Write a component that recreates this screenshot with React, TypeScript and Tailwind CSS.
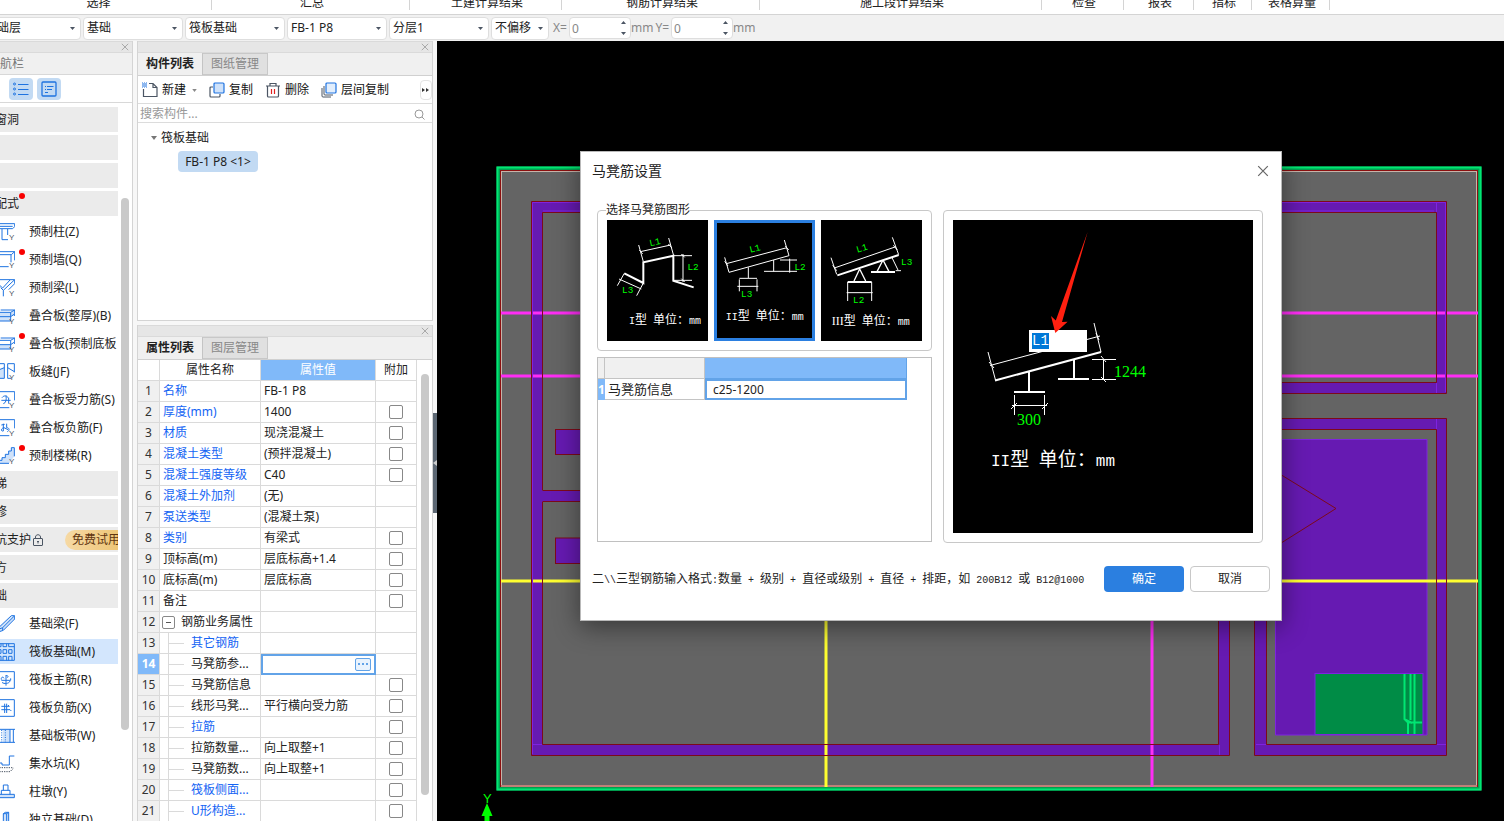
import { useEffect, useRef } from "react";
import type { ReactNode } from "react";

const ribbonGroups = [
  { label: "选择", width: "w-[212px] pr-3.5" },
  { label: "汇总", width: "w-[198px] pl-[3px]" },
  { label: "土建计算结果", width: "w-[152px] pl-[3px]" },
  { label: "钢筋计算结果", width: "w-[198px] pl-[3px]" },
  { label: "施工段计算结果", width: "w-[282px] pl-[3px]" },
  { label: "检查", width: "w-[82px] pl-[3px]" },
  { label: "报表", width: "w-[70px] pl-[3px]" },
  { label: "指标", width: "w-[58px] pl-[3px]" },
  { label: "表格算量", width: "w-[78px] pl-[3px]" },
];

type NavRow = {
  label: string;
  kind: "group" | "item";
  icon?: string;
  dot?: boolean;
  active?: boolean;
  trial?: boolean;
};

const navRows: NavRow[] = [
  { label: "门窗洞", kind: "group" },
  { label: "", kind: "group" },
  { label: "", kind: "group" },
  { label: "装配式", kind: "group", dot: true },
  { label: "预制柱(Z)", kind: "item", icon: "column" },
  { label: "预制墙(Q)", kind: "item", icon: "wall", dot: true },
  { label: "预制梁(L)", kind: "item", icon: "beam" },
  { label: "叠合板(整厚)(B)", kind: "item", icon: "slab" },
  { label: "叠合板(预制底板", kind: "item", icon: "slabHalf", dot: true },
  { label: "板缝(JF)", kind: "item", icon: "joint" },
  { label: "叠合板受力筋(S)", kind: "item", icon: "rebarS" },
  { label: "叠合板负筋(F)", kind: "item", icon: "rebarF" },
  { label: "预制楼梯(R)", kind: "item", icon: "stair", dot: true },
  { label: "楼梯", kind: "group" },
  { label: "装修", kind: "group" },
  { label: "基坑支护", kind: "group", trial: true },
  { label: "土方", kind: "group" },
  { label: "基础", kind: "group" },
  { label: "基础梁(F)", kind: "item", icon: "footBeam" },
  { label: "筏板基础(M)", kind: "item", icon: "raft", active: true },
  { label: "筏板主筋(R)", kind: "item", icon: "raftMain" },
  { label: "筏板负筋(X)", kind: "item", icon: "raftNeg" },
  { label: "基础板带(W)", kind: "item", icon: "strip" },
  { label: "集水坑(K)", kind: "item", icon: "sump" },
  { label: "柱墩(Y)", kind: "item", icon: "pier" },
  { label: "独立基础(D)", kind: "item", icon: "pad" },
];

type Prop = {
  name: string;
  value?: string;
  blue?: boolean;
  check?: boolean;
  child?: boolean;
};

const props: Prop[] = [
  { name: "名称", value: "FB-1 P8", blue: true },
  { name: "厚度(mm)", value: "1400", blue: true, check: true },
  { name: "材质", value: "现浇混凝土", blue: true, check: true },
  { name: "混凝土类型", value: "(预拌混凝土)", blue: true, check: true },
  { name: "混凝土强度等级", value: "C40", blue: true, check: true },
  { name: "混凝土外加剂", value: "(无)", blue: true },
  { name: "泵送类型", value: "(混凝土泵)", blue: true },
  { name: "类别", value: "有梁式", blue: true, check: true },
  { name: "顶标高(m)", value: "层底标高+1.4", check: true },
  { name: "底标高(m)", value: "层底标高", check: true },
  { name: "备注", check: true },
  { name: "钢筋业务属性" },
  { name: "其它钢筋", blue: true, child: true },
  { name: "马凳筋参...", child: true },
  { name: "马凳筋信息", child: true, check: true },
  { name: "线形马凳...", value: "平行横向受力筋", child: true, check: true },
  { name: "拉筋", blue: true, child: true, check: true },
  { name: "拉筋数量...", value: "向上取整+1", child: true, check: true },
  { name: "马凳筋数...", value: "向上取整+1", child: true, check: true },
  { name: "筏板侧面...", blue: true, child: true, check: true },
  { name: "U形构造...", blue: true, child: true, check: true },
];

const tag = (
  <text x="27" y="52" fontSize="24" fill="#4b5563" stroke="none" fontFamily="Liberation Sans, sans-serif">
    Y
  </text>
);

const navIcons: Record<string, ReactNode> = {
  column: (
    <>
      <path d="M-2 2H44V11L38 17H-2M-2 10H38M6 18V50H24M23 18V36" />
      {tag}
    </>
  ),
  wall: (
    <>
      <path d="M-2 2H44V28M-2 11H34L44 2M33 11V34M-2 47H26" />
      {tag}
    </>
  ),
  beam: (
    <>
      <path d="M-2 2H44L10 34V52M-2 18L8 27L30 3M10 34L2 26M44 3V14L26 32" />
      {tag}
    </>
  ),
  slab: (
    <>
      <path d="M-2 16H34L44 7V26H30V42H-2Z" fill="#cfe2fa" stroke="none" />
      <path d="M-2 16H32V42H-2M-2 29H32M2 9H44L32 16M44 9V27M32 29L42 22" />
      {tag}
    </>
  ),
  slabHalf: (
    <>
      <path d="M-2 29H32V42H-2Z" fill="#cfe2fa" stroke="none" />
      <path d="M-2 16H32V42H-2M-2 29H32M2 9H44L32 16M44 9V27M32 29L42 22" />
      {tag}
    </>
  ),
  joint: (
    <>
      <path d="M-2 20L12 14V46H-2Z" fill="#cfe2fa" stroke="none" />
      <path d="M-2 2H13V46H-2M-2 20L13 14M34 46H23V2H43V28M23 14L43 26" />
      {tag}
    </>
  ),
  rebarS: (
    <>
      <path d="M-2 2H44V28M-2 50H28M6 20C12 12 22 14 24 20M4 28H32M10 38C18 36 20 26 18 14M26 20V38" />
      {tag}
    </>
  ),
  rebarF: (
    <>
      <path d="M-2 2H44V28M-2 50H28M4 18L14 16M10 14V36C2 38 2 28 12 26L24 32M20 14V26C28 26 30 34 22 38" />
      {tag}
    </>
  ),
  stair: (
    <>
      <path d="M-2 40H6V32H16V22H26V12H34V2H43V28L28 48H-2Z" fill="#cfe2fa" stroke="none" />
      <path d="M-2 40H6V32H16V22H26V12H34V2H43V28M-2 49H27" />
      {tag}
    </>
  ),
  footBeam: (
    <>
      <path d="M34 2H44V12L10 46L-2 50V36Z" fill="#cfe2fa" />
      <path d="M-2 42L8 38L42 4M8 38V46" />
    </>
  ),
  raft: (
    <path d="M-2 2H43V52H-2M-2 11H3V2M9 2V11H20V2M26 2V11H43M-2 20H3V31H-2M9 20H20V31H9ZM26 20H36V31H26ZM-2 40H3V52M9 52V40H20V52M26 52V40H36V52" />
  ),
  raftMain: (
    <path d="M-2 2H43V52H-2M18 12V44M18 14C24 12 26 18 22 20M4 26C2 18 10 16 12 22M4 28H32V22M6 34C12 40 28 38 30 30" />
  ),
  raftNeg: (
    <path d="M-2 2H43V52H-2M14 14V42M20 14V42M4 22H28L24 18M4 32H30L34 36" />
  ),
  strip: (
    <>
      <path d="M8 8H30V45H8Z" fill="#cfe2fa" stroke="none" />
      <path d="M-2 7H46M-2 46H46M30 7V46M40 7V46" />
      <path d="M5 9V46M16 9V46" strokeDasharray="3 4" />
    </>
  ),
  sump: (
    <>
      <path d="M-2 24H6V30H28V3H43" />
      <path d="M-2 38H40M-2 50H30L42 38" stroke="#4b5563" strokeDasharray="4 3" />
    </>
  ),
  pier: (
    <>
      <path d="M-2 34H43V44H-2Z" fill="#cfe2fa" />
      <path d="M4 34V22H30V34M10 22V6H24V22" />
    </>
  ),
  pad: (
    <>
      <path d="M10 30V8L16 4H26V34L43 38V52H-2V38L10 34Z" fill="#cfe2fa" />
      <path d="M10 8H20V34M20 8L26 4" />
    </>
  ),
};

function Cross({ className }: { className: string }) {
  return (
    <svg viewBox="0 0 10 10" className={className} fill="none" stroke="currentColor">
      <path d="M1 1L9 9M9 1L1 9" />
    </svg>
  );
}

function Combo({ label, value, className }: { label: string; value: string; className: string }) {
  return (
    <div className={`relative h-[23px] flex-none ${className}`}>
      <select
        aria-label={label}
        className="h-full w-full appearance-none rounded-sm border border-[#dedede] bg-white pl-[3px] text-xs text-[#222]"
      >
        <option>{value}</option>
      </select>
      <svg viewBox="0 0 5 3" className="absolute top-[10px] right-[6px] h-[3px] w-[5px] fill-[#4b5563]">
        <path d="M0 0H5L2.500 3Z" />
      </svg>
    </div>
  );
}

function Offset({ axis }: { axis: string }) {
  return (
    <>
      <label htmlFor={`offset-${axis}`} className="mx-[2px]">
        {axis}=
      </label>
      <div className="relative h-[22px] w-[62px] flex-none">
        <input
          id={`offset-${axis}`}
          defaultValue="0"
          className="h-full w-full rounded-sm border border-[#dedede] bg-white pl-[2px] text-xs text-[#888]"
        />
        <svg viewBox="0 0 5 14" className="absolute top-[4px] right-[5px] h-3.5 w-[5px] fill-[#4b5563]">
          <path d="M0 3H5L2.500 0ZM0 11H5L2.500 14Z" />
        </svg>
      </div>
      <span>mm</span>
    </>
  );
}

function PanelStrip() {
  return (
    <div className="flex h-3 flex-none items-center justify-end border-y border-[#dadada] bg-[#e6e6e6] pr-[3px] text-[#999]">
      <button aria-label="关闭面板">
        <Cross className="h-2 w-2" />
      </button>
    </div>
  );
}

function Tabs({ names }: { names: string[] }) {
  return (
    <div className="flex h-[23px] flex-none border-b border-[#d0d0d0] bg-[#f0f0f0] leading-[22px]">
      <button className="w-[65px] border-r border-[#c4c4c4] font-bold text-[#222]">{names[0]}</button>
      <button className="w-[65px] border border-l-0 border-[#c8c8c8] bg-[#e0e0e0] leading-5 text-[#888]">
        {names[1]}
      </button>
    </div>
  );
}

function Navigator() {
  return (
    <aside className="flex w-[133px] flex-none flex-col overflow-hidden border-r border-[#d4d4d4] bg-white">
      <PanelStrip />
      <div className="flex h-[22px] flex-none items-center border-b border-[#d8d8d8] bg-[#f0f0f0] text-[#777]">
        <span className="-ml-3">导航栏</span>
      </div>
      <div className="flex h-[28px] flex-none items-center gap-1 border-b border-[#d8d8d8] pl-[9px]">
        <button aria-label="列表" className="flex h-[22px] w-6 items-center justify-center rounded-sm bg-[#c2daf3]">
          <svg viewBox="0 0 16 14" className="h-3.5 w-4" fill="none" stroke="#1e73e0">
            <path d="M5 2.5H15.500M5 7.500H15.500M5 12.500H15.500" />
            <circle cx="1.500" cy="2" r="1" />
            <circle cx="1.500" cy="7" r="1" />
            <circle cx="1.500" cy="12" r="1" />
          </svg>
        </button>
        <button aria-label="详情" className="flex h-[22px] w-6 items-center justify-center rounded-sm bg-[#c2daf3]">
          <svg viewBox="0 0 16 16" className="h-4 w-4" fill="none" stroke="#1e73e0">
            <rect x="1" y="1" width="14" height="14" rx="1" strokeWidth="1.3" />
            <path d="M4 5.500H5M6 5.500H12.500M4 8.500H5M6 8.500H11M4 11.500H7" />
          </svg>
        </button>
      </div>
      <div className="flex min-h-0 flex-1">
        <ul className="flex w-[118px] flex-none flex-col gap-[3px] overflow-hidden pt-1">
          {navRows.map((row, i) => (
            <li
              key={i}
              className={`relative flex h-[25px] flex-none items-center whitespace-nowrap ${
                row.kind === "group" ? "bg-[#ebebeb]" : row.active ? "bg-[#d3e6fd]" : ""
              }`}
            >
              {row.kind === "group" ? (
                <span className="-ml-[17px]">{row.label}</span>
              ) : (
                <>
                  <svg
                    viewBox="0 0 45 54"
                    className="mr-3.5 h-[18px] w-[15px] flex-none"
                    fill="none"
                    stroke="#1e73e0"
                    strokeWidth="3"
                  >
                    {navIcons[row.icon!]}
                  </svg>
                  <span>{row.label}</span>
                </>
              )}
              {row.trial && (
                <>
                  <svg viewBox="0 0 10 12" className="ml-0.5 h-3 w-2.5 flex-none" fill="none" stroke="#4b5563">
                    <rect x="0.500" y="4.500" width="9" height="7" rx="0.500" />
                    <path d="M2.500 4.500V3C2.500 0 7.500 0 7.500 3V4.500M5 7V9.500M4 7.500H6" />
                  </svg>
                  <span className="ml-[22px] h-5 rounded-l-full bg-linear-to-r from-[#f6d9a4] to-[#ebbf66] pr-4 pl-[7px] leading-5 text-[#5e3410]">
                    免费试用
                  </span>
                </>
              )}
              {row.dot && (
                <span className="absolute top-[2px] left-[19px] h-1.5 w-1.5 rounded-full bg-[#f80000]" />
              )}
            </li>
          ))}
        </ul>
        <div className="mt-[95px] ml-[3px] h-[532px] w-2 rounded-full bg-[#c9c9c9]" />
      </div>
    </aside>
  );
}

function ComponentList() {
  return (
    <section className="flex h-[280px] flex-none flex-col border border-t-0 border-[#d4d4d4] bg-white">
      <PanelStrip />
      <Tabs names={["构件列表", "图纸管理"]} />
      <div className="flex h-[28px] flex-none items-center border-b border-[#dcdcdc] pt-px pl-1 text-[#111]">
        <button className="flex items-center gap-1">
          <svg viewBox="0 0 16 16" className="h-4 w-4" fill="none" stroke="#4b5563" strokeWidth="1.2">
            <path d="M1.500 7V14.500H15V5.500L11 1.500H7M11 2V5.500H15" />
            <path d="M0 1H5M0 3H5M0 5H5" stroke="#1e73e0" strokeDasharray="1 1" />
            <path d="M1 2H5M1 4H5" stroke="#1e73e0" strokeDasharray="1 1" />
          </svg>
          新建
        </button>
        <svg viewBox="0 0 6 4" className="mr-3 ml-1.5 h-[3px] w-[5px] fill-[#888]">
          <path d="M0 0H6L3 4Z" />
        </svg>
        <button className="mr-3 flex items-center gap-1">
          <svg viewBox="0 0 16 16" className="h-4 w-4" fill="none" strokeWidth="1.2">
            <path d="M4 5H2Q1 5 1 6V14Q1 15 2 15H10Q11 15 11 14V12" stroke="#4b5563" />
            <rect x="5" y="1" width="10" height="10" rx="1" stroke="#1e73e0" fill="#cfe2fa" />
          </svg>
          复制
        </button>
        <button className="mr-3 flex items-center gap-1">
          <svg viewBox="0 0 16 16" className="h-4 w-4" fill="none" stroke="#4b5563" strokeWidth="1.2">
            <path d="M1 4H15M5 4V1.500H11V4M2.500 4V14Q2.500 15 3.500 15H12.500Q13.500 15 13.500 14V4" />
            <path d="M6.500 7V12M9.500 7V12" stroke="#e02020" />
          </svg>
          删除
        </button>
        <button className="flex items-center gap-1">
          <svg viewBox="0 0 16 16" className="h-4 w-4" fill="none" strokeWidth="1.2">
            <path d="M1 6V14Q1 15 2 15H10M3 4V12Q3 13 4 13H12" stroke="#4b5563" strokeWidth="1" />
            <rect x="5" y="1" width="10" height="10" rx="1" stroke="#1e73e0" fill="#e2eefc" />
          </svg>
          层间复制
        </button>
        <button aria-label="更多" className="ml-auto flex h-5 w-3 items-center justify-center rounded-sm border border-[#e4e4e4]">
          <svg viewBox="0 0 8 6" className="h-1.5 w-2 flex-none fill-[#333]">
            <path d="M0 1L3 3L0 5ZM4 1L7 3L4 5Z" />
          </svg>
        </button>
      </div>
      <div className="flex h-[19px] flex-none items-center border-b border-[#dcdcdc] pt-[2px] pr-[7px]">
        <input
          aria-label="搜索构件"
          placeholder="搜索构件..."
          className="min-w-0 flex-1 pl-[2px] text-xs outline-none placeholder:text-[#999]"
        />
        <svg viewBox="0 0 11 11" className="h-[11px] w-[11px]" fill="none" stroke="#999">
          <circle cx="5" cy="5" r="4" />
          <path d="M8 8L10.500 10.500" />
        </svg>
      </div>
      <div className="pt-1.5">
        <div className="flex h-[18px] items-center gap-1 pl-[13px]">
          <svg viewBox="0 0 6 4" className="h-1 w-1.5 fill-[#777]">
            <path d="M0 0H6L3 4Z" />
          </svg>
          筏板基础
        </div>
        <button className="mt-[4px] ml-10 h-[21px] w-20 rounded-sm bg-[#c2daf3] px-[3px] whitespace-nowrap">
          FB-1 P8 &lt;1&gt;
        </button>
      </div>
    </section>
  );
}

function PropertyList() {
  return (
    <section className="flex min-h-0 flex-1 flex-col overflow-hidden border-x border-[#d4d4d4] bg-white">
      <PanelStrip />
      <Tabs names={["属性列表", "图层管理"]} />
      <div className="flex min-h-0 flex-1">
        <table className="w-[279px] flex-none table-fixed border-separate border-spacing-0 self-start whitespace-nowrap">
          <thead>
            <tr className="h-[21px] *:border-r *:border-b *:border-[#dadada] *:p-0 *:font-normal">
              <th className="w-[22px]" />
              <th className="w-[101px]">属性名称</th>
              <th className="w-[115px] bg-[#80b9f9] text-white">属性值</th>
              <th>附加</th>
            </tr>
          </thead>
          <tbody>
            {props.map((p, i) => (
              <tr key={p.name} className="h-[21px] *:border-r *:border-b *:border-[#dadada] *:p-0">
                <td
                  className={`text-center ${
                    i === 13 ? "bg-[#80b9f9] font-bold text-white" : "bg-[#f0f0f0] text-[#333]"
                  }`}
                >
                  {i + 1}
                </td>
                <td className={p.blue ? "text-[#1464f4]" : ""}>
                  {p.child ? (
                    <div className="flex h-5 items-center">
                      <span className="ml-2 h-full w-px bg-[#dadada]" />
                      <span className="mr-[7px] h-px w-[15px] bg-[#dadada]" />
                      {p.name}
                    </div>
                  ) : i === 11 ? (
                    <div className="flex h-5 items-center gap-1.5 pl-[2px]">
                      <button
                        aria-label="收起"
                        className="flex h-[13px] w-[13px] items-center justify-center rounded-xs border border-[#888]"
                      >
                        <span className="h-px w-[5px] bg-[#555]" />
                      </button>
                      {p.name}
                    </div>
                  ) : (
                    <div className="flex h-5 items-center pl-[3px]">{p.name}</div>
                  )}
                </td>
                <td className={i === 13 ? "outline-2 -outline-offset-2 outline-[#62a3e8]" : ""}>
                  <div className="flex h-5 items-center pl-[3px]">
                    {p.value}
                    {i === 13 && (
                      <button
                        aria-label="设置参数图"
                        className="mr-1 ml-auto flex h-[13px] w-4 items-center justify-center gap-[2px] rounded-xs border border-[#62a3e8] bg-[#e9f3fe] *:h-[2px] *:w-[2px] *:bg-[#62a3e8]"
                      >
                        <span />
                        <span />
                        <span />
                      </button>
                    )}
                  </div>
                </td>
                <td>
                  {p.check && (
                    <input
                      type="checkbox"
                      aria-label={`附加 ${p.name}`}
                      className="mx-auto block h-3.5 w-3.5 appearance-none rounded-xs border border-[#888] bg-white"
                    />
                  )}
                </td>
              </tr>
            ))}
          </tbody>
        </table>
        <div className="mt-3.5 ml-1 h-[421px] w-2 rounded-full bg-[#c9c9c9]" />
      </div>
    </section>
  );
}

function Plan() {
  return (
    <svg
      viewBox="437 41 1067 780"
      preserveAspectRatio="xMinYMin slice"
      className="absolute inset-0 h-full w-full"
      fill="none"
    >
      <rect x="498.500" y="168.500" width="981" height="620" fill="#646464" stroke="#00a050" strokeWidth="4" />
      <rect x="497.500" y="167.500" width="983" height="622" stroke="#00e673" strokeWidth="2" />
      <rect x="501.500" y="171.500" width="975" height="615" stroke="#c8b4aa" />
      <rect x="500.500" y="170.500" width="977" height="616" stroke="#8b1010" />
      <path d="M501 786H1477" stroke="#c08078" strokeWidth="2" />

      <g fill="#661ab2" fillRule="evenodd">
        <path d="M531 201H1447V393.500H1229.500V755.500H531ZM542.500 212.500V744.500H1218.500V382.500H1436V212.500Z" />
        <path d="M1254.500 418H1447V755.500H1254.500ZM1266 429.500V744.500H1436V429.500Z" />
        <path d="M555 429.500H600V454.500H555ZM555 538H600V564H555ZM542 490.500H600V502H542Z" />
        <path d="M1275.500 439.500H1427V735H1275.500Z" stroke="#7f22e0" />
      </g>

      <g stroke="#ff2df5" strokeWidth="3">
        <path d="M501 313H1478M501 376H1478M1152 600V787" />
      </g>
      <g stroke="#ffff30" strokeWidth="3">
        <path d="M501 581H1478M826 600V787" />
      </g>

      <g stroke="#7f22e0">
        <path d="M532.500 202.500H1445.500V392M532.500 202.500V754M543 211H1434M532 744.500H542M1436.500 202V212M1436.500 383V393M1436.500 419V429M1256 744.500H1266M1436 744.500H1446M1219.500 745V755" />
      </g>
      <g stroke="#7d0a1a">
        <path d="M531.500 201.500H1446.500V393.500H1229.500V755.500H531.500Z" />
        <path d="M542.500 490V212.500H1436.500V382.500H1218.500V744.500H542.500V502" />
        <path d="M542.500 490.500H600M542.500 501.500H600" />
        <path d="M1254.500 418.500H1446.500V755.500H1254.500ZM1266.500 429.500H1436.500V744.500H1266.500Z" />
        <path d="M555 429.500H600M555 454.500H600M555.500 429V455M555 538H600M555 563.500H600M555.500 538V564" />
        <path d="M1270 468L1336 508.500L1270 550" />
      </g>

      <rect x="1315" y="673.500" width="108" height="61" fill="#008c46" stroke="#7f22e0" />
      <path
        d="M1404.500 674V719L1408 722.500V734M1410.500 674V720M1414.500 674V734M1405 719.500L1412 723M1408 722.500H1422"
        stroke="#00e673"
        strokeWidth="2"
      />

      <path d="M487 803L492.500 816H489.500V822H484.500V816H481.500Z" fill="#00ff00" />
      <text x="483" y="803" fill="#00ff00" fontSize="13" fontFamily="Liberation Sans, sans-serif">
        Y
      </text>
    </svg>
  );
}

// drawing captions keep the half-width / full-width rhythm of a CAD bitmap font
function Caption({ x, y, size, prefix }: { x: number; y: number; size: number; prefix: string }) {
  const latin = Math.round((size * 5) / 6);
  return (
    <text x={x} y={y} fill="#fff" stroke="none" fontSize={size} className="font-['Noto_Sans_CJK_SC',sans-serif]">
      <tspan
        fontSize={prefix === "III" ? size : latin}
        className={
          prefix === "III" ? "font-['Liberation_Serif',serif]" : "font-['Liberation_Mono',monospace]"
        }
      >
        {prefix}
      </tspan>
      型
      <tspan fontSize={latin} className="font-['Liberation_Mono',monospace]">
        {"\u00a0"}
      </tspan>
      单位：
      <tspan fontSize={latin} className="font-['Liberation_Mono',monospace]">
        mm
      </tspan>
    </text>
  );
}

function Dim({ x, y, turn, children }: { x: number; y: number; turn?: number; children: string }) {
  return (
    <text
      x={x}
      y={y}
      fill="#00ff00"
      stroke="none"
      fontSize="28"
      textAnchor="middle"
      dominantBaseline="central"
      transform={turn ? `rotate(${turn} ${x} ${y})` : undefined}
      className="font-['Liberation_Mono',monospace]"
    >
      {children}
    </text>
  );
}

function Thumb({ box, label, active, children }: { box: string; label: string; active?: boolean; children: ReactNode }) {
  return (
    <button aria-label={label} className="relative h-[121px] w-[101px] bg-black">
      <svg viewBox={box} className="h-full w-full" fill="none" stroke="#fff" strokeWidth="3">
        {children}
      </svg>
      {active && <span className="absolute inset-0 border-3 border-[#2b7fe0]" />}
    </button>
  );
}

function Preview() {
  const ref = useRef<HTMLInputElement>(null);

  useEffect(() => {
    ref.current?.focus();
    ref.current?.select();
  }, []);

  return (
    <div className="relative h-[313px] w-[300px] bg-black">
      <svg viewBox="953 220 300 313" className="h-full w-full" fill="none" stroke="#fff">
        <path d="M995 380.500L1101 352" strokeWidth="2" />
        <path d="M988 352L995.500 380M1094 323L1101 352M990 365.500L1100 336M989 362L994 368M1096 333L1099 340" />
        <path d="M1029 371V392M1014 392H1045M1074 359V379M1058 379H1089" strokeWidth="2" />
        <path d="M1092 359.500H1116M1092 379.500H1116M1103.500 359V380M1101 356L1106 362M1101 377L1106 382" />
        <path d="M1014.500 395V415M1044.500 395V415M1012 405.500H1047M1011 409L1017 403M1042 409L1048 403" />
        <g fill="#00ff00" stroke="none" fontSize="16" className="font-['Liberation_Serif',serif]">
          <text x="1114" y="377">1244</text>
          <text x="1017" y="425">300</text>
        </g>
        <Caption x={991} y={466} size={19} prefix="II" />
      </svg>
      <input
        ref={ref}
        aria-label="L1"
        defaultValue="L1"
        className="absolute top-[110px] left-[76px] h-[22px] w-[58px] bg-white px-[3px] font-['Liberation_Mono',monospace] text-sm leading-4 text-black outline-none selection:bg-[#0078d7] selection:text-white"
      />
      <svg viewBox="0 0 300 313" className="pointer-events-none absolute inset-0 h-full w-full" fill="#ff2010">
        <path d="M134.600 12L109 102L114.600 101.700L102.300 113L98 96L102.800 100.500Z" />
      </svg>
    </div>
  );
}

// 12px ideographs with 6px wide latin glyphs
function FormatHint({ text }: { text: string }) {
  return (
    <p className="whitespace-pre text-[#222]">
      {text.split(/([\x20-\x7e]+)/).map((part, i) =>
        i % 2 ? (
          <span key={i} className="font-['Liberation_Mono',monospace] text-[10px]">
            {part}
          </span>
        ) : (
          part
        )
      )}
    </p>
  );
}

function SettingsDialog() {
  return (
    <div
      role="dialog"
      aria-label="马凳筋设置"
      className="absolute top-[110px] left-[143px] w-[702px] border border-[#b9b9b9] bg-white shadow-[0_6px_24px_rgba(0,0,0,0.45)]"
    >
      <header className="flex h-[38px] items-center justify-between pr-3 pl-[11px]">
        <h2 className="text-sm">马凳筋设置</h2>
        <button aria-label="关闭" className="text-[#666]">
          <Cross className="h-3 w-3" />
        </button>
      </header>

      <div className="flex gap-[11px] px-4 pt-[20px]">
        <div className="flex w-[335px] flex-col gap-[6px]">
          <div role="group" aria-labelledby="shape-title" className="relative h-[141px] rounded-sm border border-[#c8c8c8]">
            <span id="shape-title" className="absolute -top-2.5 left-2 bg-white leading-[18px]">
              选择马凳筋图形
            </span>
            <div className="relative flex gap-[6px] pt-[9px] pl-[9px]">
              <Thumb box="81 210 303 363" label="I型">
                <path d="M133 370L190 399V337L280 317V392L341 412" strokeWidth="6" />
                <path d="M176 285L190 335M266 264L281 317M181 305L272 285M178 300L188 312M265 282L276 294" />
                <path d="M280 317H336M280 391H336M309 312V396M304 312L314 322M304 386L314 396" />
                <path d="M133 370L112 407M190 399L170 437M117 387L184 417" />
                <Dim x={225} y={278} turn={-12}>L1</Dim>
                <Dim x={339} y={352}>L2</Dim>
                <Dim x={143} y={421}>L3</Dim>
                <Caption x={147} y={521} size={36} prefix="I" />
              </Thumb>
              <Thumb box="402 210 303 363" label="II型" active>
                <path d="M434 322L447 367M613 270L627 317M439 341L621 293M447 367L627 317M434 334L444 348M616 288L626 300" />
                <path d="M505 352V384M478 385H531M478 388V424M531 388V424M472 409H535" />
                <path d="M581 330V364M552 364H651M600 330H651M629 326V368" />
                <Dim x={525} y={297} turn={-14}>L1</Dim>
                <Dim x={660} y={351}>L2</Dim>
                <Dim x={500} y={433}>L3</Dim>
                <Caption x={437} y={511} size={36} prefix="II" />
              </Thumb>
              <Thumb box="723 210 303 363" label="III型">
                <path d="M772 376L956 315M803 396H875M873 366H945" strokeWidth="6" />
                <path d="M839 357L822 393M839 357L857 393M909 330L891 365M909 330L927 365" strokeWidth="4" />
                <path d="M753 323L770 373M937 262L956 314M763 354L948 290M758 346L770 362M940 286L952 300" />
                <path d="M803 396V453M875 396V453M800 428H878M936 323L954 360M947 362H963" />
                <Dim x={846} y={296} turn={-17}>L1</Dim>
                <Dim x={836} y={452}>L2</Dim>
                <Dim x={980} y={336}>L3</Dim>
                <Caption x={755} y={525} size={36} prefix="III" />
              </Thumb>
            </div>
          </div>

          <div className="h-[185px] border border-[#c0c0c0]">
            <table className="w-[309px] table-fixed border-separate border-spacing-0">
              <thead>
                <tr className="h-[21px] *:border-r *:border-b *:border-[#c4c4c4] *:bg-[#f0f0f0] *:p-0">
                  <th className="w-[7px]" />
                  <th className="w-[100px]" />
                  <th className="border-[#62a3e8]! bg-[#80b9f9]!" />
                </tr>
              </thead>
              <tbody>
                <tr className="h-[21px] *:p-0">
                  <td className="bg-[#80b9f9] text-center leading-4 font-bold text-white">1</td>
                  <td className="border-r border-b border-[#c4c4c4] pl-[3px]! text-[13px] leading-4">
                    <label htmlFor="stool-info">马凳筋信息</label>
                  </td>
                  <td>
                    <input
                      id="stool-info"
                      defaultValue="c25-1200"
                      className="block h-[21px] w-full border-2 border-[#62a3e8] pl-1.5 text-xs outline-none"
                    />
                  </td>
                </tr>
              </tbody>
            </table>
          </div>
        </div>

        <div className="h-[333px] w-[320px] rounded-sm border border-[#c8c8c8] p-[9px]">
          <Preview />
        </div>
      </div>

      <footer className="flex items-center justify-between pt-[23px] pr-[11px] pb-[28px] pl-[11px]">
        <FormatHint text={"二\\\\三型钢筋输入格式:数量 + 级别 + 直径或级别 + 直径 + 排距，如 200B12 或 B12@1000"} />
        <div className="flex gap-1.5">
          <button className="h-[26px] w-20 rounded-sm bg-[#2b7fe0] text-white">确定</button>
          <button className="h-[26px] w-20 rounded-sm border border-[#c8c8c8] bg-white">取消</button>
        </div>
      </footer>
    </div>
  );
}

export default function App() {
  return (
    <div className="flex h-screen w-full flex-col overflow-hidden bg-[#f7f7f7] font-['Noto_Sans','Noto_Sans_CJK_SC',sans-serif] text-xs text-[#222]">
      <nav className="flex h-[15px] flex-none overflow-hidden border-b border-[#d4d4d4] bg-white">
        {ribbonGroups.map((g) => (
          <div
            key={g.label}
            className={`flex h-2.5 flex-none items-end justify-center border-r border-[#d4d4d4] leading-3.5 ${g.width}`}
          >
            {g.label}
          </div>
        ))}
      </nav>

      <div className="flex h-[26px] flex-none items-center gap-[2px] bg-[#f1f1f1] text-[#888]">
        <Combo label="楼层" value="基础层" className="-ml-[19px] w-[100px]" />
        <Combo label="构件大类" value="基础" className="w-[100px]" />
        <Combo label="构件类型" value="筏板基础" className="w-[100px]" />
        <Combo label="构件" value="FB-1 P8" className="w-[100px]" />
        <Combo label="分层" value="分层1" className="w-[100px]" />
        <Combo label="偏移" value="不偏移" className="w-[58px]" />
        <div className="flex items-center">
          <Offset axis="X" />
          <Offset axis="Y" />
        </div>
      </div>

      <main className="flex min-h-0 flex-1">
        <Navigator />
        <div className="ml-1 flex w-[296px] flex-none flex-col gap-1">
          <ComponentList />
          <PropertyList />
        </div>
        <div className="w-1 flex-none">
          <button aria-label="折叠面板" className="mt-[372px] flex h-[100px] w-1 items-center bg-[#5c6773]">
            <svg viewBox="0 0 4 6" className="h-1.5 w-1 fill-[#ccc]">
              <path d="M4 0V6L0 3Z" />
            </svg>
          </button>
        </div>
        <div className="relative flex-1 overflow-hidden bg-black">
          <Plan />
          <SettingsDialog />
        </div>
      </main>
    </div>
  );
}
